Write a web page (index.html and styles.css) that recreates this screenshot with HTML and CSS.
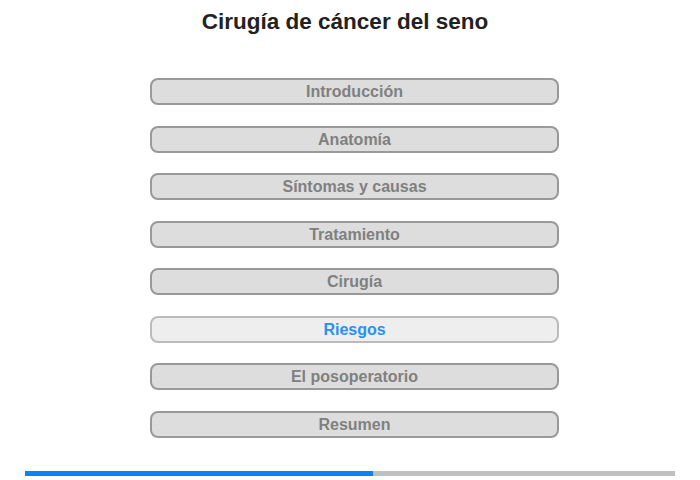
FILE: index.html
```html
<!DOCTYPE html>
<html lang="es">
<head>
<meta charset="utf-8">
<title>Cirugía de cáncer del seno</title>
<link rel="stylesheet" href="styles.css">
</head>
<body>
<div class="page">
  <h1 class="title">Cirugía de cáncer del seno</h1>
  <nav class="menu">
    <div class="item">Introducción</div>
    <div class="item">Anatomía</div>
    <div class="item">Síntomas y causas</div>
    <div class="item">Tratamiento</div>
    <div class="item">Cirugía</div>
    <div class="item active">Riesgos</div>
    <div class="item">El posoperatorio</div>
    <div class="item">Resumen</div>
  </nav>
  <div class="progress"><div class="progress-fill" style="width:348px"></div></div>
</div>
</body>
</html>
```
FILE: styles.css
```css
html, body {
  margin: 0;
  padding: 0;
  background: #fff;
}
.page {
  width: 700px;
  height: 480px;
  font-family: "Liberation Sans", Arial, sans-serif;
  display: flex;
  flex-direction: column;
}
.title {
  margin: 8px 0 0 0;
  height: 28px;
  line-height: 28px;
  font-size: 22.5px;
  font-weight: bold;
  color: #222;
  text-align: center;
  padding-right: 10px;
}
.menu {
  margin: 42px 0 0 150px;
  width: 409px;
  display: flex;
  flex-direction: column;
  gap: 20.5px;
}
.item {
  box-sizing: border-box;
  height: 27px;
  border: 2px solid #999;
  border-radius: 8px;
  background: #ddd;
  color: #808080;
  font-size: 16px;
  font-weight: bold;
  line-height: 23px;
  text-align: center;
}
.item.active {
  border-color: #bbb;
  background: #eee;
  color: #2a90f5;
}
.progress {
  margin: 33.5px 0 0 25px;
  width: 650px;
  height: 5px;
  background: #c0c0c0;
}
.progress-fill {
  height: 100%;
  background: #0a84f5;
}
```
